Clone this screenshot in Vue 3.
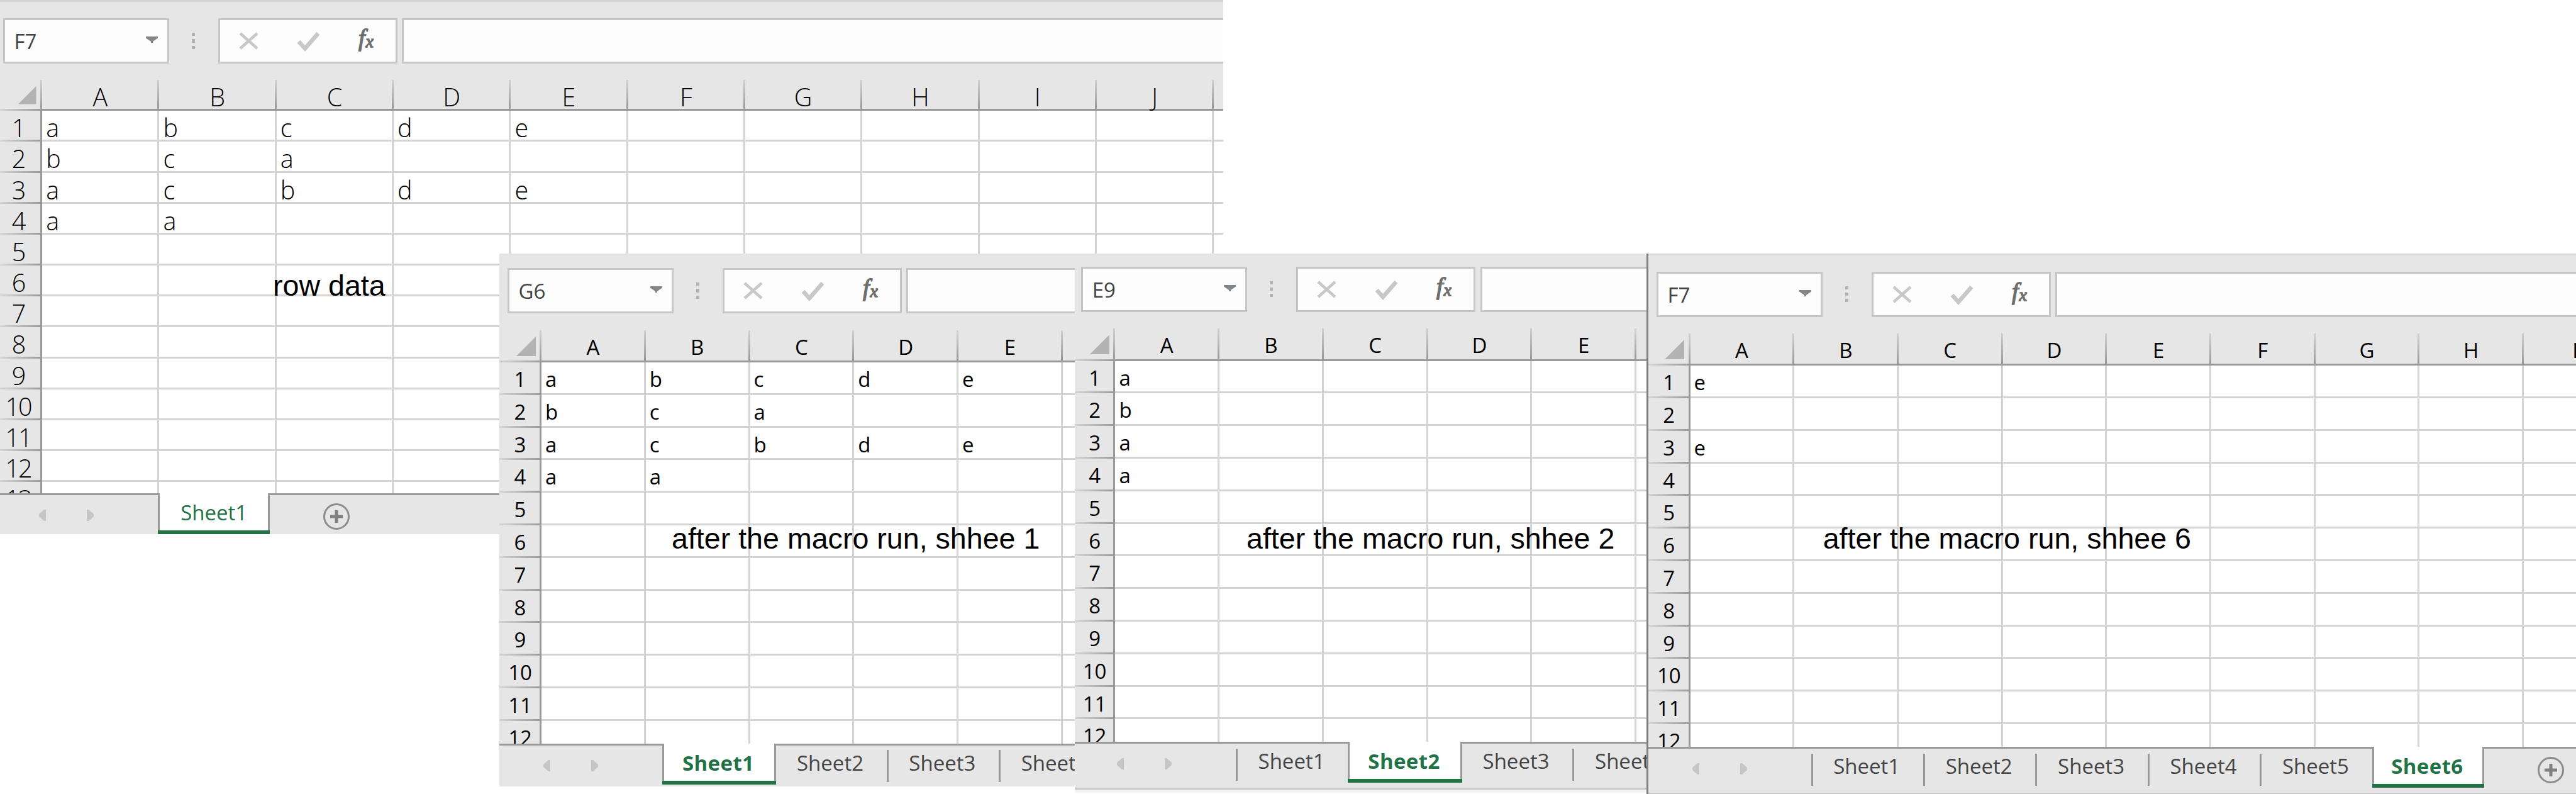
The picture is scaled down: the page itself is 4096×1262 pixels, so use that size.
<script setup>
const columns = (letters) => letters.split('')

const windows = [
  {
    id: 'raw', x: 0, y: 0, w: 1945.4, h: 849.4, topLine: true, large: true,
    name: 'F7', nameLeft: 5, barTop: 29.1, barHeight: 127.2,
    headHeight: 49.1, railWidth: 67.2, colWidth: 186.3, rowHeight: 49.17, bodyHeight: 608,
    cols: columns('ABCDEFGHIJ '), rows: 13,
    data: [['a', 'b', 'c', 'd', 'e'], ['b', 'c', 'a'], ['a', 'c', 'b', 'd', 'e'], ['a', 'a']],
    tabLeft: 250.9, tabWidth: 178.5, tabs: ['Sheet1'], active: 0, light: true, plus: true,
  },
  {
    id: 'one', x: 794, y: 403, w: 914.8, h: 846.6,
    name: 'G6', nameLeft: 13, barTop: 23, barHeight: 121.6,
    headHeight: 51.5, railWidth: 67.1, colWidth: 165.72, rowHeight: 51.8, bodyHeight: 606,
    cols: columns('ABCDE '), rows: 12,
    data: [['a', 'b', 'c', 'd', 'e'], ['b', 'c', 'a'], ['a', 'c', 'b', 'd', 'e'], ['a', 'a']],
    tabLeft: 259, tabWidth: 178.35, tabs: ['Sheet1', 'Sheet2', 'Sheet3', 'Sheet4'], active: 0,
  },
  {
    id: 'two', x: 1708.8, y: 403, w: 909.3, h: 856.7,
    name: 'E9', nameLeft: 10.4, barTop: 20.5, barHeight: 119.1,
    headHeight: 51.6, railWidth: 64.6, colWidth: 165.72, rowHeight: 51.8, bodyHeight: 605.8,
    cols: columns('ABCDE '), rows: 12,
    data: [['a'], ['b'], ['a'], ['a']],
    tabLeft: 256, tabWidth: 178.5, tabs: ['Sheet1', 'Sheet2', 'Sheet3', 'Sheet4'], active: 1, status: true,
  },
  {
    id: 'six', x: 2618, y: 403, w: 1478, h: 859, topLine: true, edge: true,
    name: 'F7', nameLeft: 12.9, barTop: 28.5, barHeight: 126.6,
    headHeight: 51.6, railWidth: 66.5, colWidth: 165.7, rowHeight: 51.8, bodyHeight: 606,
    cols: columns('ABCDEFGHI'), rows: 12,
    data: [['e'], [], ['e']],
    tabLeft: 258.5, tabWidth: 178.45, tabs: ['Sheet1', 'Sheet2', 'Sheet3', 'Sheet4', 'Sheet5', 'Sheet6'],
    active: 5, plus: true, status: true,
  },
]

const notes = [
  { text: 'row data', x: 434, baseline: 469.5 },
  { text: 'after the macro run, shhee 1', x: 1068, baseline: 871.6 },
  { text: 'after the macro run, shhee 2', x: 1982, baseline: 871.6 },
  { text: 'after the macro run, shhee 6', x: 2898.7, baseline: 871.6 },
]

const px = (n) => n + 'px'
const vars = (s) => ({
  left: px(s.x), top: px(s.y), width: px(s.w), height: px(s.h),
  '--name-left': px(s.nameLeft), '--bar-top': px(s.barTop), '--bar-h': px(s.barHeight),
  '--head-h': px(s.headHeight), '--rail-w': px(s.railWidth), '--col-w': px(s.colWidth),
  '--row-h': px(s.rowHeight), '--body-h': px(s.bodyHeight),
  '--tab-left': px(s.tabLeft), '--tab-w': px(s.tabWidth),
})
</script>

<template>
  <main class="board">
    <section
      v-for="s in windows" :key="s.id" class="window"
      :class="{ large: s.large, 'top-line': s.topLine, edge: s.edge }" :style="vars(s)"
    >
      <div class="bar">
        <div class="box name">
          <span>{{ s.name }}</span>
          <svg class="caret" width="19" height="10" viewBox="0 0 19 10"><path d="M0 0H19V2.5L11 8V10H8V8L0 2.5Z" /></svg>
        </div>
        <div class="dots"><i></i><i></i><i></i></div>
        <div class="box actions">
          <svg width="285" height="72" viewBox="0 0 285 72">
            <path class="soft" d="M35 24L62 48M62 24L35 48" />
            <path class="soft check" d="M128 37L138 48L159 24" />
            <text class="f" x="223" y="43.5">f</text>
            <text class="x" x="234.5" y="46.3">x</text>
          </svg>
        </div>
        <div class="box formula"></div>
      </div>

      <div class="head">
        <div class="corner"><svg viewBox="0 0 30 30"><path d="M30 0V30H0Z" /></svg></div>
        <div v-for="(c, i) in s.cols" :key="i" class="col">{{ c }}</div>
      </div>

      <div class="body">
        <div v-for="r in s.rows" :key="r" class="row">
          <div class="rail">{{ r }}</div>
          <div v-for="(c, i) in s.cols" :key="i" class="cell">{{ s.data[r - 1]?.[i] }}</div>
        </div>
      </div>

      <div class="tabbar">
        <div class="nav">
          <svg width="11" height="18" viewBox="0 0 11 18"><path d="M11 0V18H8L0 11V7L8 0Z" /></svg>
          <svg width="11" height="18" viewBox="0 0 11 18"><path d="M0 0V18H3L11 11V7L3 0Z" /></svg>
        </div>
        <div
          v-for="(t, i) in s.tabs" :key="t" class="tab"
          :class="{ active: i === s.active, light: s.light, bare: i === s.active + 1, last: i === s.tabs.length - 1 }"
        >{{ t }}</div>
        <svg v-if="s.plus" class="plus" width="42" height="42" viewBox="0 0 42 42">
          <circle cx="21" cy="21" r="19.5" />
          <path d="M11 21H31M21 11V31" />
        </svg>
      </div>
      <div v-if="s.status" class="status"></div>
    </section>

    <p v-for="n in notes" :key="n.text" class="note" :style="{ left: px(n.x), top: px(n.baseline - 42) }">{{ n.text }}</p>
  </main>
</template>

<style>
body {
  margin: 0;
  background: #fff;
}
</style>

<style scoped>
.board {
  position: relative;
  width: 4096px;
  height: 1262px;
  overflow: hidden;
  background: #fff;
  font-family: "Open Sans", "Noto Sans", sans-serif;
}
.window {
  position: absolute;
  box-sizing: border-box;
  display: flex;
  flex-direction: column;
  overflow: hidden;
  background: #e6e6e6;
  color: #000;
  font-size: 33px;
}
.window.large { font-size: 39.5px; }
.window.top-line { box-shadow: inset 0 3px #d4d4d4; }
.window.edge { border-left: 3px solid #808080; }

.bar {
  flex: none;
  box-sizing: border-box;
  height: var(--bar-h);
  padding: var(--bar-top) 0 0 var(--name-left);
  display: flex;
  align-items: flex-start;
}
.box {
  box-sizing: border-box;
  height: 72.4px;
  flex: none;
  border: 3px solid #c6c6c6;
  background: #fdfdfd;
}
.name {
  width: 264px;
  padding: 0 15px 0 14.5px;
  display: flex;
  justify-content: space-between;
  color: #444;
  font-size: 33px;
  line-height: 67px;
}
.caret { margin-top: 26px; fill: #80868a; }
.dots {
  width: 5px;
  margin: 23px 36.5px 0 36.3px;
  display: flex;
  flex-direction: column;
  gap: 5px;
}
.dots i { height: 5.3px; background: #b3b3b3; }
.actions { width: 285px; margin-right: 7.6px; }
.actions svg { display: block; margin: -3px; }
.soft { fill: none; stroke: #c8c8c8; stroke-width: 4.5; }
.check { stroke-width: 6.5; }
.f, .x { font-family: "Liberation Serif", serif; font-style: italic; fill: #6e6e6e; stroke: #6e6e6e; stroke-width: 1.5; }
.f { font-size: 38px; }
.x { font-size: 28px; }
.formula { flex: 1; border-right: 0; }

.head {
  flex: none;
  box-sizing: border-box;
  height: var(--head-h);
  display: flex;
}
.corner, .col {
  flex: none;
  box-sizing: border-box;
  border-bottom: 3px solid #999;
  background: linear-gradient(#d0d0d0, #999) right / 3px 100% no-repeat;
}
.corner {
  width: var(--rail-w);
  border-bottom: 0;
  padding: 0 9.6px 10.5px 0;
  display: flex;
  justify-content: flex-end;
  align-items: flex-end;
  background: linear-gradient(#d0d0d0, #999) right / 3px 100% no-repeat,
    linear-gradient(90deg, #d4d4d4, #999) bottom / 100% 3px no-repeat;
}
.corner svg { width: 31px; height: 31px; fill: #b3b3b3; }
.large .corner svg { width: 28.5px; height: 28.5px; }
.col {
  width: var(--col-w);
  padding: 3px 2px 0 0;
  text-align: center;
  line-height: 47px;
}
.large .col { padding-top: 6px; line-height: 43px; }

.body {
  flex: none;
  height: var(--body-h);
  overflow: hidden;
  background: #fff;
}
.row { display: flex; height: var(--row-h); }
.rail, .cell {
  flex: none;
  box-sizing: border-box;
  height: 100%;
  padding-top: 4px;
  line-height: 45.8px;
  white-space: nowrap;
}
.large .rail, .large .cell { padding-top: 6px; line-height: 42.6px; }
.large .col, .large .rail, .large .cell { font-weight: 350; }
.rail {
  width: var(--rail-w);
  padding-right: 1px;
  text-align: center;
  background: linear-gradient(#999, #999) right / 3px 100% no-repeat,
    linear-gradient(90deg, #d4d4d4, #999) bottom / 100% 3px no-repeat, #e6e6e6;
}
.large .rail { padding-right: 9px; letter-spacing: -2px; }
.cell {
  width: var(--col-w);
  padding-left: 6px;
  border-right: 3px solid #d4d4d4;
  border-bottom: 3px solid #d4d4d4;
}

.tabbar {
  flex: none;
  position: relative;
  box-sizing: border-box;
  height: 72.5px;
  display: flex;
  background: linear-gradient(#999, #999) top / 100% 3px no-repeat;
  font-size: 33px;
  color: #444;
}
.nav {
  flex: none;
  box-sizing: border-box;
  width: var(--tab-left);
  padding: 26px 102px 0 0;
  display: flex;
  justify-content: flex-end;
  gap: 64.7px;
}
.nav svg { fill: #c6c6c6; }
.tab {
  flex: none;
  box-sizing: border-box;
  width: var(--tab-w);
  height: 64.8px;
  padding-right: 1px;
  text-align: center;
  line-height: 62px;
  background: linear-gradient(#999, #999) 0 10.4px / 3px 51.4px no-repeat;
}
.tab.bare { background: none; }
.tab.active {
  width: calc(var(--tab-w) + 3px);
  margin-right: -3px;
  padding-right: 3px;
  border: solid #999;
  border-width: 0 3px;
  background: linear-gradient(#217346, #217346) bottom / 100% 6px no-repeat border-box, #fff;
  border-image: linear-gradient(#999 59px, #217346 59px) 0 3;
  color: #217346;
  font-weight: 700;
  letter-spacing: 0.4px;
}
.tab.active.last { width: var(--tab-w); margin-right: 0; }
.tab.active.light { padding-right: 0; font-weight: 400; letter-spacing: 0; }
.plus {
  flex: none;
  margin: 15.4px 0 0 84.9px;
  fill: none;
  stroke: #808080;
  stroke-width: 5;
}
.plus circle { stroke: #8c8c8c; stroke-width: 3; }
.status {
  flex: none;
  height: 8px;
  box-sizing: border-box;
  border-top: 3px solid #c6c6c6;
  background: #f3f3f3;
}
.note {
  position: absolute;
  margin: 0;
  color: #000;
  font-family: "Liberation Sans", Arial, sans-serif;
  font-size: 46.6px;
  line-height: 52px;
  white-space: nowrap;
}
</style>
